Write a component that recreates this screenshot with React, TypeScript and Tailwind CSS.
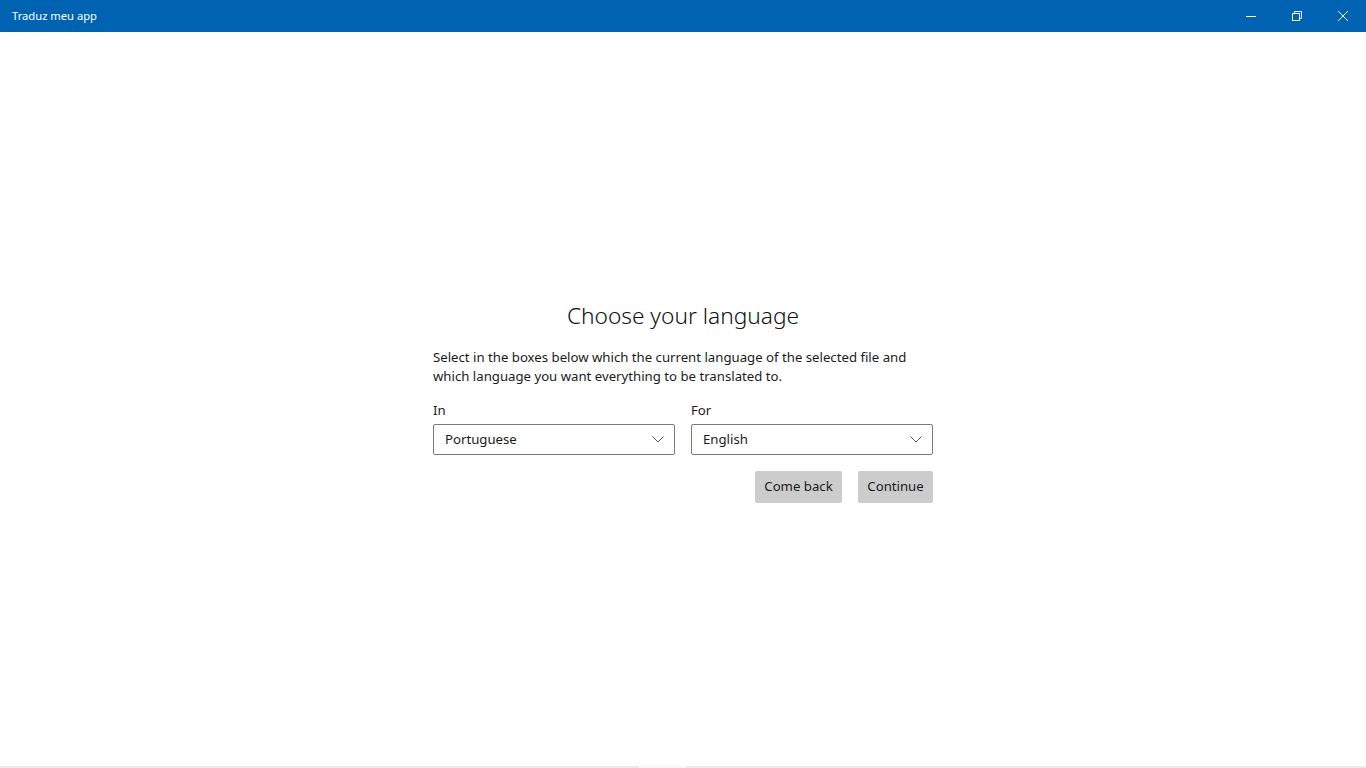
export default function App() {
  const font = { fontFamily: '"Noto Sans", "Open Sans", sans-serif' };

  return (
    <div className="flex h-[768px] w-[1366px] flex-col overflow-hidden bg-white font-['Noto_Sans',sans-serif] text-[#1a1a1a]" style={font}>
      {/* Title bar */}
      <div className="flex h-8 shrink-0 items-center bg-[#0063b1] text-white">
        <span className="pl-3 text-[11.2px]">Traduz meu app</span>
        <div className="ml-auto flex h-full">
          <button className="flex h-full w-[46px] items-center justify-center">
            <svg width="10" height="10" viewBox="0 0 10 10">
              <path d="M0 5.5h10" stroke="white" strokeWidth="1" />
            </svg>
          </button>
          <button className="flex h-full w-[46px] items-center justify-center">
            <svg width="10" height="10" viewBox="0 0 10 10" fill="none" stroke="white" strokeWidth="1">
              <rect x="0.5" y="2.5" width="7" height="7" />
              <path d="M2.5 2.5V0.5h7v7h-2" />
            </svg>
          </button>
          <button className="flex h-full w-[46px] items-center justify-center">
            <svg width="10" height="10" viewBox="0 0 10 10" stroke="white" strokeWidth="1">
              <path d="M0 0L10 10M10 0L0 10" />
            </svg>
          </button>
        </div>
      </div>

      {/* Body */}
      <div className="flex flex-1 justify-center pt-[268px]">
        <div className="w-[500px]">
          <h1 className="text-center text-[22.7px] font-light leading-8 text-[#111]">Choose your language</h1>
          <p className="mt-4 text-[13.2px] leading-[19px]">
            Select in the boxes below which the current language of the selected file and which language you want
            everything to be translated to.
          </p>

          <div className="mt-[15px] grid grid-cols-2 gap-4">
            {[
              { label: 'In', value: 'Portuguese' },
              { label: 'For', value: 'English' },
            ].map((f) => (
              <div key={f.label}>
                <div className="text-[13.2px] leading-[19px]">{f.label}</div>
                <div className="mt-1 flex h-[31px] items-center rounded-[2px] border border-[#7a7a7a] pl-[11px] pr-[10px] text-[13.2px]">
                  <span>{f.value}</span>
                  <svg className="ml-auto" width="12" height="7" viewBox="0 0 12 7" fill="none" stroke="#555" strokeWidth="1">
                    <path d="M0.5 0.5L6 6L11.5 0.5" />
                  </svg>
                </div>
              </div>
            ))}
          </div>

          <div className="mt-4 flex justify-end gap-4">
            <button className="h-8 w-[87px] rounded-[2px] bg-[#cccccc] text-[13.2px]">Come back</button>
            <button className="h-8 w-[75px] rounded-[2px] bg-[#cccccc] text-[13.2px]">Continue</button>
          </div>
        </div>
      </div>

      {/* Bottom scroll strip */}
      <div className="flex h-[2px] shrink-0 bg-[#ebebeb]">
        <div className="ml-[639px] w-[47px] bg-[#f6f6f6]" />
      </div>
    </div>
  );
}
